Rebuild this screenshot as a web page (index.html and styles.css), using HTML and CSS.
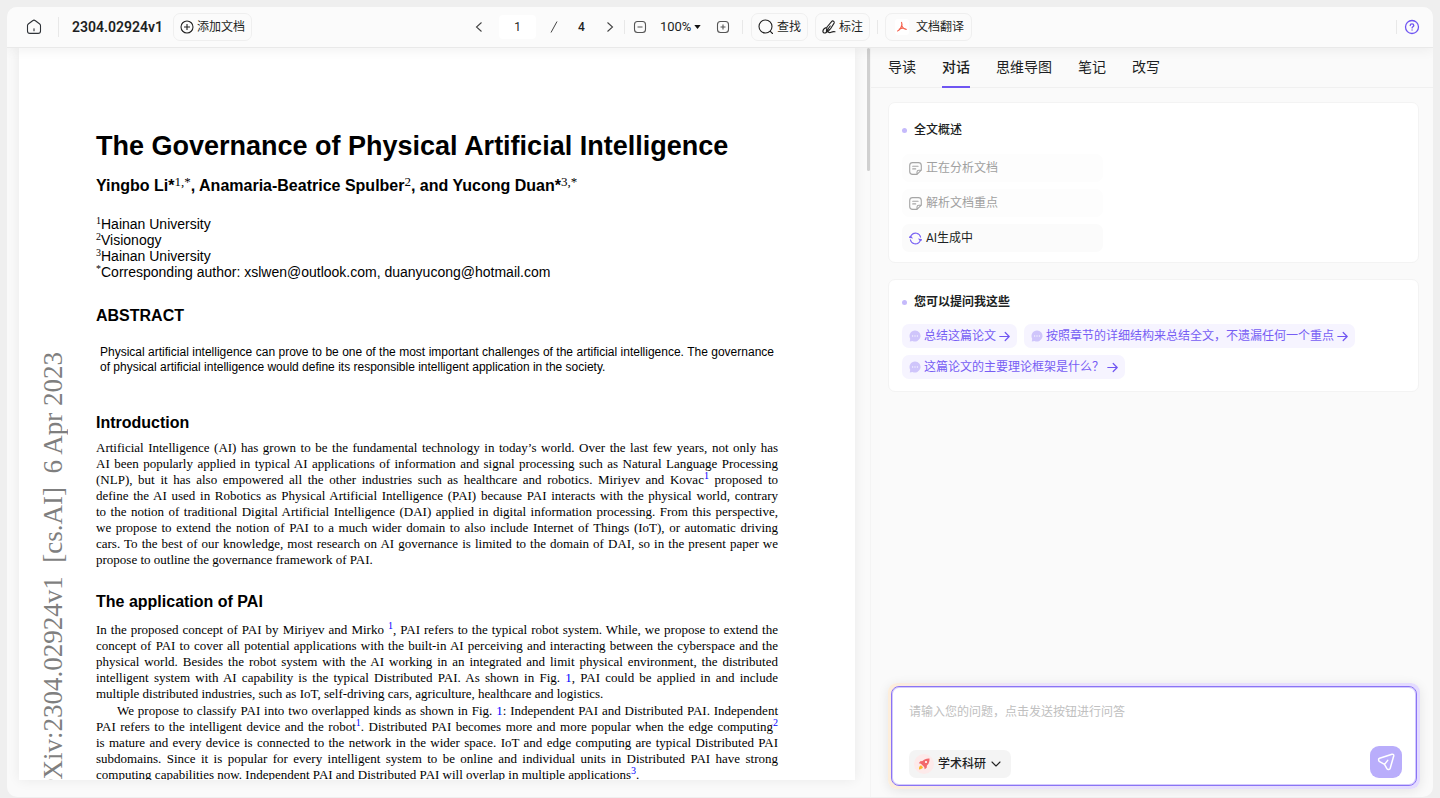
FILE: index.html
```html
<!DOCTYPE html>
<html lang="zh-CN">
<head>
<meta charset="utf-8">
<meta name="viewport" content="width=device-width, initial-scale=1">
<title>2304.02924v1</title>
<link rel="stylesheet" href="styles.css">
</head>
<body>
<div class="app">
  <header class="topbar">
    <div class="topbar-left">
      <button class="icon-btn" aria-label="首页">
        <svg width="16" height="16" viewBox="0 0 16 16" fill="none" stroke="#2f3338" stroke-width="1.1" stroke-linejoin="round" stroke-linecap="round"><path d="M1.5 6.6c0-.7.3-1.200.8-1.600L6.600 1.700c.8-.6 2-.6 2.800 0l4.300 3.300c.5.4.8 1 .8 1.600v5.400c0 1.400-1 2.400-2.400 2.400H3.900c-1.400 0-2.400-1-2.400-2.400z"/><path d="M8 9.800v2"/></svg>
      </button>
      <span class="divider divider-tall"></span>
      <h1 class="doc-name">2304.02924v1</h1>
      <button class="pill-btn add-btn">
        <svg width="14" height="14" viewBox="0 0 14 14" fill="none" stroke="#222" stroke-width="1.1"><circle cx="7" cy="7" r="6"/><path d="M7 4v6M4 7h6"/></svg>
        添加文档
      </button>
    </div>
    <div class="toolbar">
      <button class="icon-btn" aria-label="上一页"><svg width="10" height="12" viewBox="0 0 10 12" fill="none" stroke="#444" stroke-width="1.100"><path d="M7.500 1.500L2.500 6l5 4.500"/></svg></button>
      <input class="page-input" type="text" value="1" aria-label="页码">
      <span class="slash"><svg width="8" height="12" viewBox="0 0 8 12" stroke="#444" stroke-width="1"><path d="M1 11.500L7 .5"/></svg></span>
      <span class="page-total">4</span>
      <button class="icon-btn" aria-label="下一页"><svg width="10" height="12" viewBox="0 0 10 12" fill="none" stroke="#444" stroke-width="1.100"><path d="M2.500 1.500l5 4.500-5 4.500"/></svg></button>
      <span class="divider"></span>
      <button class="icon-btn zoom-out" aria-label="缩小"><svg width="14" height="14" viewBox="0 0 14 14" fill="none" stroke="#555" stroke-width="1.100"><rect x="1.500" y="1.500" width="11" height="11" rx="3"/><path d="M4.500 7h5"/></svg></button>
      <span class="zoom-field">
        <select class="zoom-select" aria-label="缩放"><option>100%</option></select>
        <svg width="7" height="4" viewBox="0 0 7 4"><path d="M.3 0h6.400L3.500 4z" fill="#111"/></svg>
      </span>
      <button class="icon-btn zoom-in" aria-label="放大"><svg width="14" height="14" viewBox="0 0 14 14" fill="none" stroke="#555" stroke-width="1.100"><rect x="1.500" y="1.500" width="11" height="11" rx="3"/><path d="M4.500 7h5M7 4.500v5"/></svg></button>
      <span class="divider"></span>
      <button class="pill-btn">
        <svg width="16" height="16" viewBox="0 0 16 16" fill="none" stroke="#222" stroke-width="1.100" stroke-linecap="round"><circle cx="7.500" cy="7.500" r="6.500"/><path d="M12.300 12.300l2.200 2.200"/></svg>
        查找
      </button>
      <button class="pill-btn">
        <svg width="14" height="16" viewBox="0 0 14 16" fill="none" stroke="#222" stroke-width="1.100" stroke-linejoin="round" stroke-linecap="round"><path d="M9.800 2.300c.9-1.100 3.100.4 2.300 1.800L8.400 10l-4 2.200.6-4.200z"/><path d="M4.400 12.200L8.200 7M4.300 8.600C1.800 9.600.7 11 .9 12.700c.3 1.500 2 1.700 3.300.8l2.900-1.900M6.400 13.200c.9.500 1.500.7 2.700.1 1.200-.6 2.100-.9 3.900-.5"/></svg>
        标注
      </button>
      <span class="divider divider-gap"></span>
      <button class="pill-btn translate-btn">
        <span class="pdf-icon"><svg width="12" height="12" viewBox="0 0 12 12" fill="none" stroke="#f4604c" stroke-width="1.200" stroke-linecap="round"><path d="M5.600 1.500c.7 1.200.2 3.200-.5 4.700C4.300 7.900 3.100 9.600 1.600 10M5.500 4.800c.8 1.600 2.200 3 4.700 3.700M3.400 8.100c1.900-1 4.400-1.100 6.600.1"/></svg></span>
        文档翻译
      </button>
    </div>
    <div class="topbar-right">
      <span class="divider"></span>
      <button class="icon-btn" aria-label="帮助"><svg width="16" height="16" viewBox="0 0 16 16" fill="none" stroke="#6f55f2" stroke-width="1.300" stroke-linecap="round"><circle cx="8" cy="8" r="6.500"/><path d="M6.200 6.600c0-1 .8-1.700 1.800-1.700s1.800.7 1.800 1.600c0 1.200-1.700 1.300-1.700 2.400M8.050 11v.1"/></svg></button>
    </div>
  </header>

  <div class="workspace">
    <main class="viewer">
      <article class="paper">
        <div class="stamp"><span>arXiv:2304.02924v1&nbsp; [cs.AI]&nbsp; 6 Apr 2023</span></div>
        <div class="paper-body">
          <h2 class="paper-title">The Governance of Physical Artificial Intelligence</h2>
          <p class="authors">Yingbo Li*<sup>1,*</sup>, Anamaria-Beatrice Spulber<sup>2</sup>, and Yucong Duan*<sup>3,*</sup></p>
          <ul class="affiliations">
            <li><sup>1</sup>Hainan University</li>
            <li><sup>2</sup>Visionogy</li>
            <li><sup>3</sup>Hainan University</li>
            <li><sup>*</sup>Corresponding author: xslwen@outlook.com, duanyucong@hotmail.com</li>
          </ul>
          <h3 class="section-title">ABSTRACT</h3>
          <p class="abstract">
            <span class="line">Physical artificial intelligence can prove to be one of the most important challenges of the artificial intelligence. The governance</span>
            <span class="line line-last">of physical artificial intelligence would define its responsible intelligent application in the society.</span>
          </p>
          <h3 class="section-title intro-title">Introduction</h3>
          <p class="prose">
            <span class="line">Artificial Intelligence (AI) has grown to be the fundamental technology in today’s world. Over the last few years, not only has</span>
            <span class="line">AI been popularly applied in typical AI applications of information and signal processing such as Natural Language Processing</span>
            <span class="line">(NLP), but it has also empowered all the other industries such as healthcare and robotics. Miriyev and Kovac<sup><a href="#ref1">1</a></sup> proposed to</span>
            <span class="line">define the AI used in Robotics as Physical Artificial Intelligence (PAI) because PAI interacts with the physical world, contrary</span>
            <span class="line">to the notion of traditional Digital Artificial Intelligence (DAI) applied in digital information processing. From this perspective,</span>
            <span class="line">we propose to extend the notion of PAI to a much wider domain to also include Internet of Things (IoT), or automatic driving</span>
            <span class="line">cars. To the best of our knowledge, most research on AI governance is limited to the domain of DAI, so in the present paper we</span>
            <span class="line line-last">propose to outline the governance framework of PAI.</span>
          </p>
          <h3 class="section-title application-title">The application of PAI</h3>
          <p class="prose">
            <span class="line">In the proposed concept of PAI by Miriyev and Mirko <sup><a href="#ref1">1</a></sup>, PAI refers to the typical robot system. While, we propose to extend the</span>
            <span class="line">concept of PAI to cover all potential applications with the built-in AI perceiving and interacting between the cyberspace and the</span>
            <span class="line">physical world. Besides the robot system with the AI working in an integrated and limit physical environment, the distributed</span>
            <span class="line">intelligent system with AI capability is the typical Distributed PAI. As shown in Fig. <a href="#fig1">1</a>, PAI could be applied in and include</span>
            <span class="line line-last">multiple distributed industries, such as IoT, self-driving cars, agriculture, healthcare and logistics.</span>
          </p>
          <p class="prose prose-next">
            <span class="line line-indent">We propose to classify PAI into two overlapped kinds as shown in Fig. <a href="#fig1">1</a>: Independent PAI and Distributed PAI. Independent</span>
            <span class="line">PAI refers to the intelligent device and the robot<sup><a href="#ref1">1</a></sup>. Distributed PAI becomes more and more popular when the edge computing<sup><a href="#ref2">2</a></sup></span>
            <span class="line">is mature and every device is connected to the network in the wider space. IoT and edge computing are typical Distributed PAI</span>
            <span class="line">subdomains. Since it is popular for every intelligent system to be online and individual units in Distributed PAI have strong</span>
            <span class="line line-last">computing capabilities now. Independent PAI and Distributed PAI will overlap in multiple applications<sup><a href="#ref3">3</a></sup>.</span>
          </p>
        </div>
      </article>
      <div class="scroll-track"><div class="scroll-thumb"></div></div>
    </main>

    <aside class="assistant">
      <nav class="tabs" role="tablist">
        <button class="tab" role="tab">导读</button>
        <button class="tab tab-active" role="tab" aria-selected="true">对话</button>
        <button class="tab" role="tab">思维导图</button>
        <button class="tab" role="tab">笔记</button>
        <button class="tab" role="tab">改写</button>
      </nav>
      <div class="chat">
        <section class="card summary-card">
          <h2 class="card-title">全文概述</h2>
          <ul class="steps">
            <li class="step step-done">
              <svg width="13" height="13" viewBox="0 0 13 13" fill="none" stroke="#a5a5a5" stroke-width="1.100" stroke-linecap="round" stroke-linejoin="round"><path d="M8 12.400H3.600A2.900 2.900 0 0 1 .7 9.500v-6A2.900 2.900 0 0 1 3.600.6h5.800a2.900 2.900 0 0 1 2.900 2.900v4.700zM8 12.400v-2.300c0-1.200.7-1.900 1.900-1.900h2.400M3.700 4.300h5.400M3.700 6.900h3"/></svg>
              正在分析文档
            </li>
            <li class="step step-done">
              <svg width="13" height="13" viewBox="0 0 13 13" fill="none" stroke="#a5a5a5" stroke-width="1.100" stroke-linecap="round" stroke-linejoin="round"><path d="M8 12.400H3.600A2.900 2.900 0 0 1 .7 9.500v-6A2.900 2.900 0 0 1 3.600.6h5.800a2.900 2.900 0 0 1 2.900 2.900v4.700zM8 12.400v-2.300c0-1.200.7-1.900 1.900-1.900h2.400M3.700 4.300h5.400M3.700 6.900h3"/></svg>
              解析文档重点
            </li>
            <li class="step">
              <svg width="13" height="13" viewBox="0 0 13 13" fill="none" stroke="#7a63f3" stroke-width="1.100" stroke-linecap="round"><path d="M1.400 7.800A5.200 5.200 0 0 0 10.600 9.800M11.600 5.200A5.200 5.200 0 0 0 2.400 3.200M4.700 1.500A5.200 5.200 0 0 0 1.400 5.700M8.300 11.500a5.200 5.200 0 0 0 3.300-4.200"/><path d="M.3 5.200l1.300-.8 1.100 1.200zM12.700 7.800l-1.300.8-1.100-1.200z" fill="#7a63f3"/></svg>
              AI生成中
            </li>
          </ul>
        </section>

        <section class="card ask-card">
          <h2 class="card-title card-title-bold">您可以提问我这些</h2>
          <div class="suggestions">
            <button class="suggestion">
              <svg width="12" height="12" viewBox="0 0 12 12"><path d="M6 .5a5.500 5.500 0 1 1-2.500 10.400L.8 11.500l.4-2.800A5.500 5.500 0 0 1 6 .5z" fill="#cfc5fb"/><path d="M3 5.500h1.200v1H3zM5.400 5.500h1.200v1H5.400zM7.800 5.500H9v1H7.800z" fill="#fff"/></svg>
              总结这篇论文
              <svg width="11" height="11" viewBox="0 0 11 11" fill="none" stroke="#6f55f2" stroke-width="1.200" stroke-linecap="round" stroke-linejoin="round"><path d="M.8 5.500h9.400M6.200 1.500l4 4-4 4"/></svg>
            </button>
            <button class="suggestion">
              <svg width="12" height="12" viewBox="0 0 12 12"><path d="M6 .5a5.500 5.500 0 1 1-2.500 10.400L.8 11.500l.4-2.800A5.500 5.500 0 0 1 6 .5z" fill="#cfc5fb"/><path d="M3 5.500h1.200v1H3zM5.400 5.500h1.200v1H5.400zM7.800 5.500H9v1H7.800z" fill="#fff"/></svg>
              按照章节的详细结构来总结全文，不遗漏任何一个重点
              <svg width="11" height="11" viewBox="0 0 11 11" fill="none" stroke="#6f55f2" stroke-width="1.200" stroke-linecap="round" stroke-linejoin="round"><path d="M.8 5.500h9.400M6.200 1.500l4 4-4 4"/></svg>
            </button>
            <button class="suggestion">
              <svg width="12" height="12" viewBox="0 0 12 12"><path d="M6 .5a5.500 5.500 0 1 1-2.500 10.400L.8 11.500l.4-2.800A5.500 5.500 0 0 1 6 .5z" fill="#cfc5fb"/><path d="M3 5.500h1.200v1H3zM5.400 5.500h1.200v1H5.400zM7.800 5.500H9v1H7.800z" fill="#fff"/></svg>
              这篇论文的主要理论框架是什么？
              <svg width="11" height="11" viewBox="0 0 11 11" fill="none" stroke="#6f55f2" stroke-width="1.200" stroke-linecap="round" stroke-linejoin="round"><path d="M.8 5.500h9.400M6.200 1.500l4 4-4 4"/></svg>
            </button>
          </div>
        </section>
      </div>

      <form class="composer">
        <div class="composer-box">
          <textarea class="composer-text" rows="1" aria-label="问题" placeholder="请输入您的问题，点击发送按钮进行问答"></textarea>
          <div class="composer-actions">
            <label class="mode">
              <span class="mode-icon"><svg width="12" height="12" viewBox="0 0 12 12"><path d="M1 11.500c-.2-2 .4-3.600 2-4.200l2 2C4.300 10.600 3 11.400 1 11.500z" fill="#fdb52a"/><path d="M11.500.5c.2 3-.6 5.300-2.600 7l-.2 2.200-2 1.500-.5-2.100-3.300-3.300-2.100-.5 1.500-2 2.200-.2C6.200 1.100 8.500.3 11.500.5z" fill="#f2686c"/><circle cx="8" cy="4" r="1.100" fill="#fff"/></svg></span>
              <select class="mode-select" aria-label="模式"><option>学术科研</option></select>
              <svg width="10" height="6" viewBox="0 0 10 6" fill="none" stroke="#222" stroke-width="1.100" stroke-linecap="round" stroke-linejoin="round"><path d="M1 1l4 4 4-4"/></svg>
            </label>
            <button class="send" type="button" aria-label="发送"><svg width="20" height="20" viewBox="0 0 20 20" fill="none" stroke="#fff" stroke-width="1.500" stroke-linecap="round" stroke-linejoin="round"><path d="M3.600 6.300L16 2.300c1.200-.3 2 .5 1.700 1.700l-3.500 12.200c-.5 1.600-2.500 1.900-3.300.5l-2.400-4.300-4.900-2.800c-1.400-.8-1.400-2.800 0-3.300zM8.500 12.400l3.200-4"/></svg></button>
          </div>
        </div>
      </form>
    </aside>
  </div>
</div>
</body>
</html>
```

FILE: styles.css
```css
* {
  box-sizing: border-box;
}

body {
  margin: 0;
  height: 100vh;
  padding: 7px 7px 1px;
  background: #efefef;
  color: #1d1f23;
  font: 12px/18px Roboto, "Noto Sans CJK SC", sans-serif;
  overflow: hidden;
}

h1, h2, h3, p, ul {
  margin: 0;
  padding: 0;
  list-style: none;
}

button, input, select, textarea {
  margin: 0;
  padding: 0;
  border: 0;
  background: none;
  color: inherit;
  font: inherit;
  appearance: none;
}

svg {
  display: block;
  flex: none;
}

.app {
  display: flex;
  flex-direction: column;
  height: 100%;
  background: #fafafa;
  border-radius: 10px;
  overflow: hidden;
}

/* Top bar */
.topbar {
  display: grid;
  grid-template-columns: 1fr auto 1fr;
  align-items: center;
  flex: none;
  height: 41px;
  padding: 0 13px 0 19px;
  background: #fbfbfb;
  border-bottom: 1px solid #e9e9e9;
  box-shadow: 0 2px 12px rgba(0, 0, 0, 0.06);
  z-index: 1;
}

.topbar-left, .toolbar, .topbar-right {
  display: flex;
  align-items: center;
}

.topbar-right {
  justify-content: flex-end;
  gap: 7px;
}

.icon-btn {
  display: flex;
}

.divider {
  width: 1px;
  height: 14px;
  background: #e8e8e8;
}

.divider-tall {
  height: 20px;
  margin: 0 13px 0 16px;
}

.doc-name {
  font-size: 14px;
  font-weight: 600;
}

.pill-btn {
  display: flex;
  align-items: center;
  gap: 3px;
  height: 28px;
  padding: 0 6px;
  border: 1px solid #efefef;
  border-radius: 7px;
}

.add-btn {
  margin-left: 10px;
}

.page-input {
  width: 37px;
  height: 24px;
  margin: 0 14px 0 15px;
  border-radius: 4px;
  background: #fff;
  text-align: center;
}

.page-total {
  margin: 0 20px;
  font-weight: 500;
}

.toolbar .divider {
  margin: 0 8px 0 9px;
}

.toolbar .divider-gap {
  margin: 0 7px;
}

.zoom-field {
  display: flex;
  align-items: center;
  gap: 2px;
  margin: 0 15px 0 13px;
}

.zoom-in {
  margin-right: 3px;
}

.zoom-select {
  font-size: 13px;
}

.toolbar .pill-btn + .pill-btn {
  margin-left: 7px;
}

.toolbar .translate-btn {
  gap: 7px;
  padding: 0 7px 0 9px;
}

.pdf-icon {
  display: flex;
  padding: 2px 1px;
  border-radius: 3px;
  background: #fff;
}

/* Document viewer */
.workspace {
  display: grid;
  grid-template-columns: minmax(0, 863fr) minmax(0, 563fr);
  flex: 1;
  min-height: 0;
}

.viewer {
  display: flex;
  min-height: 0;
  padding: 0 0 17px 12px;
}

.paper {
  display: flex;
  flex: 1;
  min-width: 0;
  overflow: hidden;
  background: #fff;
  color: #000;
  box-shadow: 0 0 12px rgba(0, 0, 0, 0.07);
}

.stamp {
  flex: none;
  width: 77px;
  padding: 304px 0 0 18px;
  color: #7f7f7f;
  font: 27px/32px "Liberation Serif", serif;
  white-space: nowrap;
}

.stamp span {
  writing-mode: vertical-rl;
  transform: rotate(180deg);
}

.paper-body {
  flex: 1;
  min-width: 0;
  padding: 80px 77px 0 0;
}

.paper-title {
  font: bold 27px/36px "Liberation Sans", sans-serif;
}

.authors {
  margin-top: 11px;
  font: bold 16px/22px "Liberation Sans", sans-serif;
}

sup {
  font-family: "Liberation Serif", serif;
  font-size: 10px;
  font-weight: normal;
  line-height: 0;
  vertical-align: 5px;
}

.authors sup {
  font-size: 13px;
}

.affiliations {
  margin-top: 19px;
  font: 14px/16px "Liberation Sans", sans-serif;
}

.section-title {
  margin-top: 25px;
  font: bold 16px/22px "Liberation Sans", sans-serif;
}

.abstract {
  margin-top: 18px;
  padding: 0 4px;
  font: 12px/15px "Liberation Sans", sans-serif;
}

.intro-title {
  margin-top: 37px;
}

.application-title {
  margin-top: 23px;
}

.prose {
  margin-top: 6px;
  font: 13px/16px "Liberation Serif", serif;
}

.application-title + .prose {
  margin-top: 9px;
}

.application-title + .prose + .prose {
  margin-top: 1px;
}

.line {
  display: block;
  white-space: nowrap;
  text-align: justify;
  text-align-last: justify;
}

.line-last {
  text-align-last: left;
}

.line-indent {
  padding-left: 21px;
}

.prose a {
  color: #00f;
  text-decoration: none;
}

.scroll-track {
  flex: none;
  width: 15px;
  padding-left: 12px;
}

.scroll-thumb {
  width: 3px;
  height: 123px;
  border-radius: 2px;
  background: #d0d0d0;
}

/* Assistant panel */
.assistant {
  display: flex;
  flex-direction: column;
  min-width: 0;
  border-left: 1px solid #f4f4f4;
}

.tabs {
  display: flex;
  gap: 26px;
  height: 40px;
  padding: 0 17px;
  border-bottom: 1px solid #f0f0f0;
  font-size: 14px;
}

.tab {
  height: 40px;
  border-bottom: 2px solid transparent;
}

.tab-active {
  border-color: #6f55f2;
  font-weight: 500;
}

.chat {
  display: flex;
  flex: 1;
  flex-direction: column;
  gap: 16px;
  padding: 14px 14px 0 17px;
}

.card {
  border: 1px solid #f3f3f3;
  border-radius: 7px;
  background: #fff;
}

.summary-card {
  padding: 18px 13px 10px;
}

.ask-card {
  padding: 13px 13px 12px;
}

.card-title {
  display: flex;
  align-items: center;
  gap: 7px;
  font-size: 12px;
  font-weight: 500;
}

.card-title::before {
  width: 5px;
  height: 5px;
  border-radius: 50%;
  background: #c5bafb;
  content: "";
}

.card-title-bold {
  font-weight: 700;
}

.steps {
  display: flex;
  flex-direction: column;
  gap: 7px;
  margin-top: 15px;
}

.step {
  display: flex;
  align-items: center;
  gap: 4px;
  width: 40%;
  height: 28px;
  padding: 0 7px;
  border-radius: 7px;
  background: #fbfbfb;
}

.step-done {
  background: #fdfdfd;
  color: #a0a0a0;
}

.suggestions {
  display: flex;
  flex-wrap: wrap;
  gap: 7px;
  margin-top: 13px;
}

.suggestion {
  display: flex;
  align-items: center;
  gap: 3px;
  height: 24px;
  padding: 0 7px;
  border-radius: 7px;
  background: #f6f4ff;
  color: #765df4;
}

.composer {
  margin: 0 13px 8px 17px;
  padding: 3px;
  border-radius: 9px;
  background: linear-gradient(90deg, #fdeedb, #ece3fb 25%, #e4dcff);
  box-shadow: 0 2px 12px rgba(0, 0, 0, 0.09);
}

.composer-box {
  display: flex;
  flex-direction: column;
  gap: 25px;
  padding: 16px 14px 7px 17px;
  border: 1px solid #8a74f5;
  border-radius: 8px;
  background: #fff;
  box-shadow: inset 0 0 0 1px #d3cafc;
}

.composer-text {
  display: block;
  width: 100%;
  height: 18px;
  resize: none;
}

.composer-text::placeholder {
  color: #c0c0c0;
}

.composer-actions {
  display: flex;
  align-items: flex-end;
  justify-content: space-between;
}

.mode {
  display: flex;
  align-items: center;
  gap: 4px;
  height: 28px;
  padding: 0 10px 0 5px;
  border-radius: 7px;
  background: #f4f4f4;
  font-weight: 500;
}

.mode-icon {
  padding: 4px;
  border-radius: 50%;
  background: #fdeaea;
}

.send {
  display: flex;
  align-items: center;
  justify-content: center;
  width: 32px;
  height: 32px;
  border-radius: 9px;
  background: #b9adfb;
}
```
